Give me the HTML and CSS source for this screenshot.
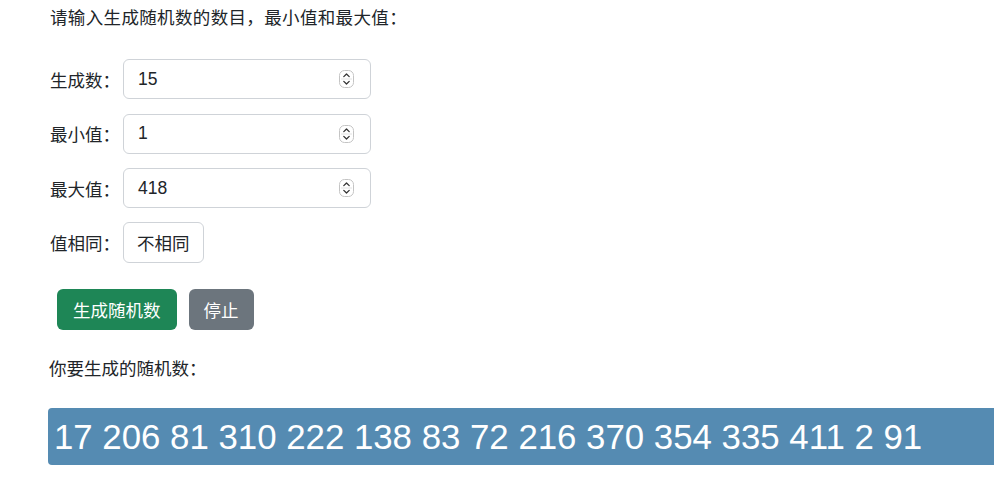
FILE: index.html
```html
<!DOCTYPE html>
<html lang="zh">
<head>
<meta charset="utf-8">
<title>随机数生成</title>
<link rel="stylesheet" href="styles.css">
</head>
<body>
<div class="page">
  <p class="intro">请输入生成随机数的数目，最小值和最大值：</p>
  <div class="form">
    <div class="row">
      <span class="label">生成数：</span>
      <div class="num-input"><span class="val">15</span>
        <svg class="spin" width="15" height="18" viewBox="0 0 15 18"><rect x="0.5" y="0.5" width="14" height="17" rx="5" fill="#fff" stroke="#c4c4c4"/><line x1="2" y1="9" x2="13" y2="9" stroke="#e2e2e2"/><path d="M4.8 6.6 L7.5 4 L10.2 6.6" fill="none" stroke="#333" stroke-width="1.3" stroke-linecap="round" stroke-linejoin="round"/><path d="M4.8 11.4 L7.5 14 L10.2 11.4" fill="none" stroke="#333" stroke-width="1.3" stroke-linecap="round" stroke-linejoin="round"/></svg>
      </div>
    </div>
    <div class="row">
      <span class="label">最小值：</span>
      <div class="num-input"><span class="val">1</span>
        <svg class="spin" width="15" height="18" viewBox="0 0 15 18"><rect x="0.5" y="0.5" width="14" height="17" rx="5" fill="#fff" stroke="#c4c4c4"/><line x1="2" y1="9" x2="13" y2="9" stroke="#e2e2e2"/><path d="M4.8 6.6 L7.5 4 L10.2 6.6" fill="none" stroke="#333" stroke-width="1.3" stroke-linecap="round" stroke-linejoin="round"/><path d="M4.8 11.4 L7.5 14 L10.2 11.4" fill="none" stroke="#333" stroke-width="1.3" stroke-linecap="round" stroke-linejoin="round"/></svg>
      </div>
    </div>
    <div class="row">
      <span class="label">最大值：</span>
      <div class="num-input"><span class="val">418</span>
        <svg class="spin" width="15" height="18" viewBox="0 0 15 18"><rect x="0.5" y="0.5" width="14" height="17" rx="5" fill="#fff" stroke="#c4c4c4"/><line x1="2" y1="9" x2="13" y2="9" stroke="#e2e2e2"/><path d="M4.8 6.6 L7.5 4 L10.2 6.6" fill="none" stroke="#333" stroke-width="1.3" stroke-linecap="round" stroke-linejoin="round"/><path d="M4.8 11.4 L7.5 14 L10.2 11.4" fill="none" stroke="#333" stroke-width="1.3" stroke-linecap="round" stroke-linejoin="round"/></svg>
      </div>
    </div>
    <div class="row">
      <span class="label">值相同：</span>
      <button class="toggle">不相同</button>
    </div>
  </div>
  <div class="actions">
    <button class="btn btn-green">生成随机数</button>
    <button class="btn btn-gray">停止</button>
  </div>
  <p class="result-label">你要生成的随机数：</p>
  <div class="result">17 206 81 310 222 138 83 72 216 370 354 335 411 2 91</div>
</div>
</body>
</html>
```

FILE: styles.css
```css
html, body {
  margin: 0;
  padding: 0;
  overflow: hidden;
  background: #fff;
}
body {
  font-family: "Liberation Sans", "Noto Sans CJK SC", sans-serif;
  font-size: 17.5px;
  color: #212529;
}
.page {
  padding: 5px 0 0 50px;
  width: 1000px;
}
.intro {
  margin: 0;
  line-height: 26px;
  letter-spacing: 0.35px;
}
.form {
  display: flex;
  flex-direction: column;
  gap: 14.5px;
  margin-top: 28px;
}
.row {
  display: flex;
  align-items: center;
  height: 40px;
}
.label {
  width: 73px;
}
.num-input {
  box-sizing: border-box;
  width: 248px;
  height: 40px;
  border: 1px solid #cfd3d8;
  border-radius: 6px;
  display: flex;
  align-items: center;
  justify-content: space-between;
  padding: 0 16px 0 14px;
}
.val {
  font-size: 17.5px;
}
.spin {
  display: block;
}
.toggle {
  box-sizing: border-box;
  height: 41px;
  padding: 0 13px;
  border: 1px solid #cfd3d8;
  border-radius: 6px;
  background: #fff;
  font: inherit;
  color: #212529;
}
.actions {
  display: flex;
  gap: 12px;
  margin: 26px 0 0 7px;
}
.btn {
  height: 41px;
  border: none;
  border-radius: 6px;
  font: inherit;
  color: #fff;
  padding: 0 16px;
}
.btn-green {
  background: #1e8656;
}
.btn-gray {
  background: #6c757d;
  padding: 0 15px;
}
.result-label {
  margin: 26px 0 0 -1px;
  line-height: 26px;
}
.result {
  margin: 26px 0 0 -2px;
  height: 57px;
  box-sizing: border-box;
  background: #558bb2;
  color: #fff;
  border-radius: 4px 0 0 4px;
  font-family: "Liberation Sans", sans-serif;
  font-size: 34.8px;
  line-height: 57px;
  padding-left: 6px;
  white-space: nowrap;
}
```
